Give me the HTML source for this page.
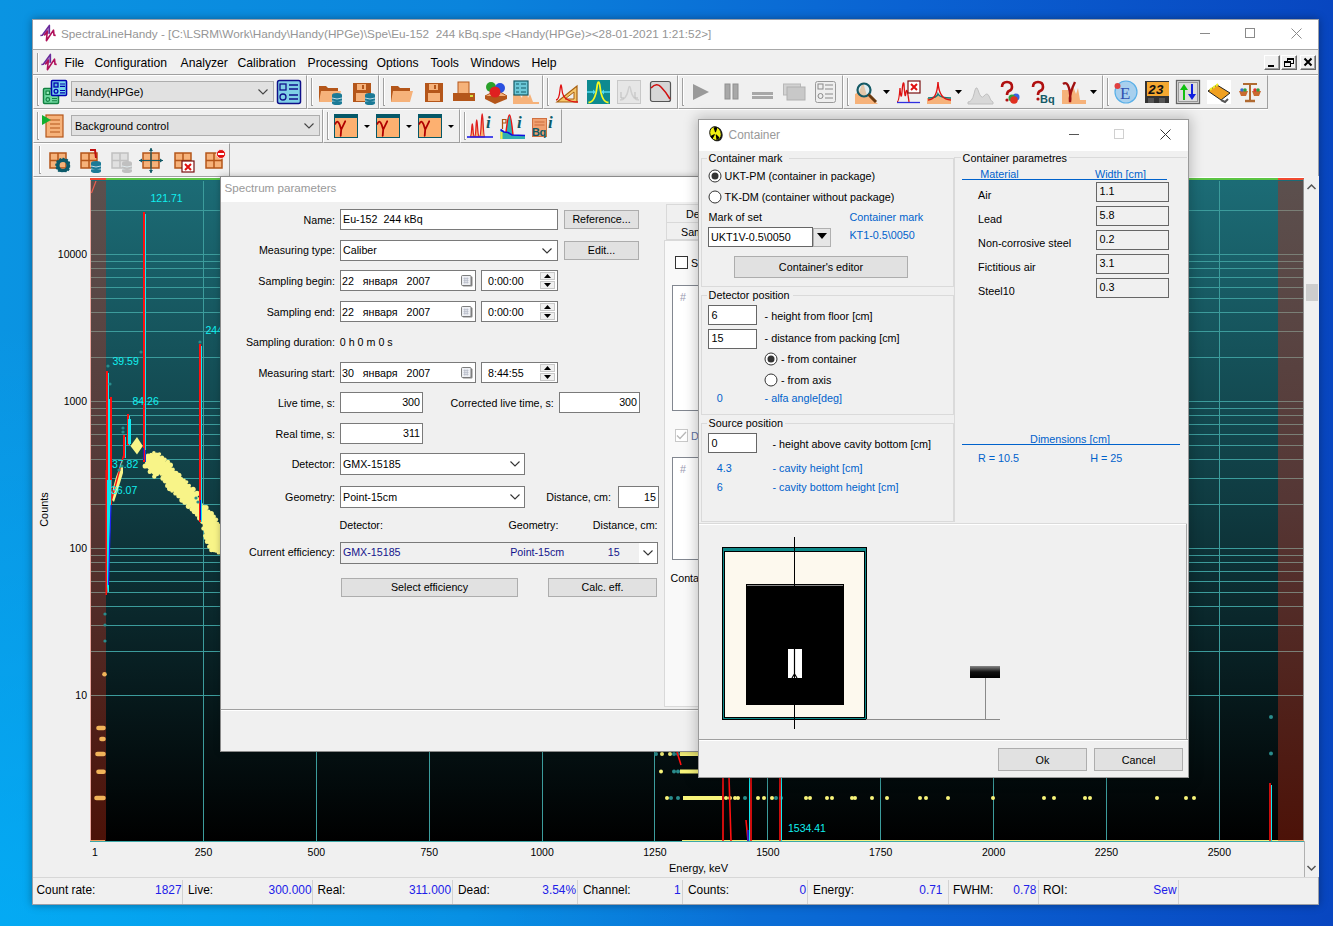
<!DOCTYPE html>
<html><head><meta charset="utf-8">
<style>
*{box-sizing:border-box;margin:0;padding:0}
html,body{width:1333px;height:926px;overflow:hidden}
body{position:relative;font-family:"Liberation Sans",sans-serif;font-size:12px;color:#000;
background:radial-gradient(ellipse 1000px 800px at 0% 100%,rgba(0,185,255,.6),rgba(0,185,255,0) 75%),linear-gradient(90deg,#0a94e2 0%,#0a84dc 35%,#0a62d2 68%,#0846c0 100%)}
.a{position:absolute}
.t{position:absolute;white-space:pre}
svg{overflow:visible}
</style></head><body>
<div class="a" style="left:32px;top:19px;width:1287px;height:886px;background:#f0f0f0;border:1px solid rgba(50,60,80,.45);box-shadow:0 0 8px rgba(0,0,0,.35)"></div>
<div class="a" style="left:33px;top:20px;width:1285px;height:29px;background:#fff"></div>
<div class="a" style="left:33px;top:49px;width:1285px;height:1px;background:#a8a8a8"></div>
<svg class="a" style="left:38px;top:23px;" width="22" height="20" viewBox="0 0 22 20"><path d="M4.3 12.3 L11.4 2.4 L11.4 10.8 Z" fill="#a88ad0"/><path d="M2.4 12.5 L4.3 12.3 L11.4 2.4 L11.4 10.8" fill="none" stroke="#6a2a9a" stroke-width="1.5" stroke-linejoin="round"/><path d="M6.3 12.5 L9.3 8.2 L8.4 17.7 L15.5 7.1 L16 12.1 L17.7 12.5" fill="none" stroke="#b0105a" stroke-width="1.6" stroke-linejoin="round"/></svg>
<div class="t" style="top:26.43px;font-size:11.75px;line-height:15px;color:#959595;left:61px;">SpectraLineHandy - [C:\LSRM\Work\Handy\Handy(HPGe)\Spe\Eu-152  244 kBq.spe &lt;Handy(HPGe)&gt;&lt;28-01-2021 1:21:52&gt;]</div>
<div class="a" style="left:1200px;top:33px;width:10px;height:1px;background:#8a8a8a"></div>
<div class="a" style="left:1245px;top:28px;width:10px;height:10px;border:1px solid #8a8a8a"></div>
<svg class="a" style="left:1291px;top:28px;" width="11" height="11" viewBox="0 0 11 11"><path d="M0.5 0.5 L10.5 10.5 M10.5 0.5 L0.5 10.5" stroke="#8a8a8a" stroke-width="1"/></svg>
<div class="a" style="left:33px;top:74px;width:1285px;height:1px;background:#a0a0a0"></div>
<div class="a" style="left:33px;top:75px;width:1285px;height:1px;background:#fff"></div>
<div class="a" style="left:37px;top:53px;width:1px;height:19px;background:#a0a0a0"></div>
<div class="a" style="left:38px;top:53px;width:1px;height:19px;background:#fff"></div>
<svg class="a" style="left:39px;top:52px;" width="22" height="20" viewBox="0 0 22 20"><path d="M4.3 12.3 L11.4 2.4 L11.4 10.8 Z" fill="#a88ad0"/><path d="M2.4 12.5 L4.3 12.3 L11.4 2.4 L11.4 10.8" fill="none" stroke="#6a2a9a" stroke-width="1.5" stroke-linejoin="round"/><path d="M6.3 12.5 L9.3 8.2 L8.4 17.7 L15.5 7.1 L16 12.1 L17.7 12.5" fill="none" stroke="#b0105a" stroke-width="1.6" stroke-linejoin="round"/></svg>
<div class="t" style="top:55.77px;font-size:12.2px;line-height:15px;left:64.5px;">File</div>
<div class="t" style="top:55.77px;font-size:12.2px;line-height:15px;left:94.5px;">Configuration</div>
<div class="t" style="top:55.77px;font-size:12.2px;line-height:15px;left:180.5px;">Analyzer</div>
<div class="t" style="top:55.77px;font-size:12.2px;line-height:15px;left:237.5px;">Calibration</div>
<div class="t" style="top:55.77px;font-size:12.2px;line-height:15px;left:307.5px;">Processing</div>
<div class="t" style="top:55.77px;font-size:12.2px;line-height:15px;left:376.5px;">Options</div>
<div class="t" style="top:55.77px;font-size:12.2px;line-height:15px;left:430.5px;">Tools</div>
<div class="t" style="top:55.77px;font-size:12.2px;line-height:15px;left:470.5px;">Windows</div>
<div class="t" style="top:55.77px;font-size:12.2px;line-height:15px;left:531.5px;">Help</div>
<div class="a" style="left:1264px;top:55px;width:16px;height:15px;background:#f0f0f0;border-top:1px solid #fff;border-left:1px solid #fff;border-right:1px solid #696969;border-bottom:1px solid #696969;box-shadow:inset -1px -1px 0 #a0a0a0"></div>
<div class="a" style="left:1268px;top:65px;width:6px;height:2px;background:#000"></div>
<div class="a" style="left:1281px;top:55px;width:16px;height:15px;background:#f0f0f0;border-top:1px solid #fff;border-left:1px solid #fff;border-right:1px solid #696969;border-bottom:1px solid #696969;box-shadow:inset -1px -1px 0 #a0a0a0"></div>
<div class="a" style="left:1287px;top:58px;width:7px;height:6px;border:1px solid #000;border-top-width:2px"></div>
<div class="a" style="left:1284px;top:61px;width:7px;height:6px;border:1px solid #000;border-top-width:2px;background:#f0f0f0"></div>
<div class="a" style="left:1300px;top:55px;width:16px;height:15px;background:#f0f0f0;border-top:1px solid #fff;border-left:1px solid #fff;border-right:1px solid #696969;border-bottom:1px solid #696969;box-shadow:inset -1px -1px 0 #a0a0a0"></div>
<svg class="a" style="left:1304px;top:58px;" width="8" height="8" viewBox="0 0 8 8"><path d="M0.5 0.5 L7.5 7.5 M7.5 0.5 L0.5 7.5" stroke="#000" stroke-width="2"/></svg>
<div class="a" style="left:33px;top:108px;width:1235px;height:1px;background:#a0a0a0"></div>
<div class="a" style="left:33px;top:109px;width:1235px;height:1px;background:#fff"></div>
<div class="a" style="left:33px;top:75px;width:274px;height:34px;border-top:1px solid #fff;border-left:1px solid #fff;border-right:1px solid #a0a0a0;border-bottom:1px solid #a0a0a0"></div>
<div class="a" style="left:37px;top:78px;width:1px;height:28px;background:#a0a0a0"></div>
<div class="a" style="left:38px;top:78px;width:1px;height:28px;background:#fff"></div>
<div class="a" style="left:37px;top:105px;width:2px;height:1px;background:#a0a0a0"></div>
<div class="a" style="left:307px;top:75px;width:72px;height:34px;border-top:1px solid #fff;border-left:1px solid #fff;border-right:1px solid #a0a0a0;border-bottom:1px solid #a0a0a0"></div>
<div class="a" style="left:311px;top:78px;width:1px;height:28px;background:#a0a0a0"></div>
<div class="a" style="left:312px;top:78px;width:1px;height:28px;background:#fff"></div>
<div class="a" style="left:311px;top:105px;width:2px;height:1px;background:#a0a0a0"></div>
<div class="a" style="left:379px;top:75px;width:164px;height:34px;border-top:1px solid #fff;border-left:1px solid #fff;border-right:1px solid #a0a0a0;border-bottom:1px solid #a0a0a0"></div>
<div class="a" style="left:383px;top:78px;width:1px;height:28px;background:#a0a0a0"></div>
<div class="a" style="left:384px;top:78px;width:1px;height:28px;background:#fff"></div>
<div class="a" style="left:383px;top:105px;width:2px;height:1px;background:#a0a0a0"></div>
<div class="a" style="left:543px;top:75px;width:135px;height:34px;border-top:1px solid #fff;border-left:1px solid #fff;border-right:1px solid #a0a0a0;border-bottom:1px solid #a0a0a0"></div>
<div class="a" style="left:547px;top:78px;width:1px;height:28px;background:#a0a0a0"></div>
<div class="a" style="left:548px;top:78px;width:1px;height:28px;background:#fff"></div>
<div class="a" style="left:547px;top:105px;width:2px;height:1px;background:#a0a0a0"></div>
<div class="a" style="left:678px;top:75px;width:165px;height:34px;border-top:1px solid #fff;border-left:1px solid #fff;border-right:1px solid #a0a0a0;border-bottom:1px solid #a0a0a0"></div>
<div class="a" style="left:682px;top:78px;width:1px;height:28px;background:#a0a0a0"></div>
<div class="a" style="left:683px;top:78px;width:1px;height:28px;background:#fff"></div>
<div class="a" style="left:682px;top:105px;width:2px;height:1px;background:#a0a0a0"></div>
<div class="a" style="left:843px;top:75px;width:260px;height:34px;border-top:1px solid #fff;border-left:1px solid #fff;border-right:1px solid #a0a0a0;border-bottom:1px solid #a0a0a0"></div>
<div class="a" style="left:847px;top:78px;width:1px;height:28px;background:#a0a0a0"></div>
<div class="a" style="left:848px;top:78px;width:1px;height:28px;background:#fff"></div>
<div class="a" style="left:847px;top:105px;width:2px;height:1px;background:#a0a0a0"></div>
<div class="a" style="left:1103px;top:75px;width:165px;height:34px;border-top:1px solid #fff;border-left:1px solid #fff;border-right:1px solid #a0a0a0;border-bottom:1px solid #a0a0a0"></div>
<div class="a" style="left:1107px;top:78px;width:1px;height:28px;background:#a0a0a0"></div>
<div class="a" style="left:1108px;top:78px;width:1px;height:28px;background:#fff"></div>
<div class="a" style="left:1107px;top:105px;width:2px;height:1px;background:#a0a0a0"></div>
<div class="a" style="left:33px;top:109px;width:290px;height:34px;border-top:1px solid #fff;border-left:1px solid #fff;border-right:1px solid #a0a0a0;border-bottom:1px solid #a0a0a0"></div>
<div class="a" style="left:37px;top:112px;width:1px;height:28px;background:#a0a0a0"></div>
<div class="a" style="left:38px;top:112px;width:1px;height:28px;background:#fff"></div>
<div class="a" style="left:37px;top:139px;width:2px;height:1px;background:#a0a0a0"></div>
<div class="a" style="left:323px;top:109px;width:137px;height:34px;border-top:1px solid #fff;border-left:1px solid #fff;border-right:1px solid #a0a0a0;border-bottom:1px solid #a0a0a0"></div>
<div class="a" style="left:327px;top:112px;width:1px;height:28px;background:#a0a0a0"></div>
<div class="a" style="left:328px;top:112px;width:1px;height:28px;background:#fff"></div>
<div class="a" style="left:327px;top:139px;width:2px;height:1px;background:#a0a0a0"></div>
<div class="a" style="left:460px;top:109px;width:102px;height:34px;border-top:1px solid #fff;border-left:1px solid #fff;border-right:1px solid #a0a0a0;border-bottom:1px solid #a0a0a0"></div>
<div class="a" style="left:464px;top:112px;width:1px;height:28px;background:#a0a0a0"></div>
<div class="a" style="left:465px;top:112px;width:1px;height:28px;background:#fff"></div>
<div class="a" style="left:464px;top:139px;width:2px;height:1px;background:#a0a0a0"></div>
<div class="a" style="left:33px;top:143px;width:197px;height:34px;border-top:1px solid #fff;border-left:1px solid #fff;border-right:1px solid #a0a0a0;border-bottom:1px solid #a0a0a0"></div>
<div class="a" style="left:39px;top:146px;width:1px;height:28px;background:#a0a0a0"></div>
<div class="a" style="left:40px;top:146px;width:1px;height:28px;background:#fff"></div>
<div class="a" style="left:39px;top:173px;width:2px;height:1px;background:#a0a0a0"></div>
<div class="a" style="left:33px;top:177px;width:1285px;height:1px;background:#fff"></div>
<div class="a" style="left:71px;top:81px;width:203px;height:21px;background:#e1e1e1;border:1px solid #adadad"></div>
<div class="t" style="top:85.22px;font-size:10.9px;line-height:14px;left:75px;">Handy(HPGe)</div>
<svg class="a" style="left:258px;top:88.5px;" width="10" height="6" viewBox="0 0 10 6"><path d="M0.5 0.5 L5 5 L9.5 0.5" fill="none" stroke="#444" stroke-width="1.1"/></svg>
<div class="a" style="left:71px;top:115px;width:249px;height:21px;background:#e1e1e1;border:1px solid #adadad"></div>
<div class="t" style="top:119.22px;font-size:10.9px;line-height:14px;left:75px;">Background control</div>
<svg class="a" style="left:304px;top:122.5px;" width="10" height="6" viewBox="0 0 10 6"><path d="M0.5 0.5 L5 5 L9.5 0.5" fill="none" stroke="#444" stroke-width="1.1"/></svg>
<svg class="a" style="left:42px;top:79px;" width="26" height="26" viewBox="0 0 26 26"><rect x="1.5" y="9.5" width="15" height="15" rx="1" fill="#70d8a0" stroke="#108040" stroke-width="1.5"/><rect x="4" y="12" width="3.5" height="3.5" fill="#a0f0c0" stroke="#108040" stroke-width="1.2"/><circle cx="5.8" cy="20.5" r="1.8" fill="none" stroke="#108040" stroke-width="1.2"/><path d="M10 19.5h5 M10 21.8h5" stroke="#108040" stroke-width="1.1"/><rect x="9.5" y="1.5" width="15" height="15" rx="1" fill="#78d4ec" stroke="#0000b0" stroke-width="1.6"/><rect x="12" y="4" width="4" height="4" fill="#60b8d8" stroke="#0000b0" stroke-width="1.3"/><circle cx="14" cy="12.3" r="1.9" fill="none" stroke="#0000b0" stroke-width="1.3"/><path d="M18 5h5 M18 7.3h5 M18 11.5h5 M18 13.8h5" stroke="#0000b0" stroke-width="1.2"/></svg>
<svg class="a" style="left:277px;top:80px;" width="24" height="24" viewBox="0 0 24 24"><rect x="0.5" y="0.5" width="23" height="23" rx="2" fill="#7fd0e6" stroke="#10108a" stroke-width="1.5"/><rect x="3" y="4" width="6" height="6" fill="none" stroke="#10108a" stroke-width="1.3"/><circle cx="6" cy="17" r="3" fill="none" stroke="#10108a" stroke-width="1.3"/><path d="M12 5h9 M12 9h9 M12 15h9 M12 19h9" stroke="#10108a" stroke-width="1.3"/></svg>
<svg class="a" style="left:318px;top:81px;" width="25" height="24" viewBox="0 0 25 24"><path d="M1 5 h7 l2 2 h10 v14 h-19z" fill="#b4561a"/><path d="M3 10 h20 l-3 11 h-19z" fill="#f6b27a"/><ellipse cx="19" cy="14" rx="5" ry="2" fill="#1b7a96"/><rect x="14" y="14" width="10" height="8" fill="#1b7a96"/><path d="M14 17 q5 2 10 0 M14 20 q5 2 10 0" stroke="#e8f4f8" stroke-width="0.8" fill="none"/><ellipse cx="19" cy="22" rx="5" ry="2" fill="#1b7a96"/></svg>
<svg class="a" style="left:351px;top:81px;" width="25" height="24" viewBox="0 0 25 24"><rect x="2" y="2" width="18" height="19" fill="#b4561a"/><rect x="6" y="3" width="9" height="6" fill="#f6b27a"/><rect x="11" y="4" width="2" height="4" fill="#b4561a"/><rect x="5" y="12" width="12" height="8" fill="#f6b27a"/><ellipse cx="19" cy="14" rx="5" ry="2" fill="#1b7a96"/><rect x="14" y="14" width="10" height="8" fill="#1b7a96"/><path d="M14 17 q5 2 10 0 M14 20 q5 2 10 0" stroke="#e8f4f8" stroke-width="0.8" fill="none"/><ellipse cx="19" cy="22" rx="5" ry="2" fill="#1b7a96"/></svg>
<svg class="a" style="left:390px;top:81px;" width="24" height="22" viewBox="0 0 24 22"><path d="M1 5 h7 l2 2 h10 v14 h-19z" fill="#b4561a"/><path d="M3 10 h20 l-3 11 h-19z" fill="#f6b27a"/></svg>
<svg class="a" style="left:423px;top:81px;" width="22" height="22" viewBox="0 0 22 22"><rect x="2" y="2" width="18" height="19" fill="#b4561a"/><rect x="6" y="3" width="9" height="6" fill="#f6b27a"/><rect x="11" y="4" width="2" height="4" fill="#b4561a"/><rect x="5" y="12" width="12" height="8" fill="#f6b27a"/></svg>
<svg class="a" style="left:452px;top:80px;" width="24" height="24" viewBox="0 0 24 24"><rect x="6" y="2" width="11" height="12" fill="#f6b27a" stroke="#b4561a" stroke-width="1"/><rect x="1" y="13" width="22" height="8" fill="#b4561a"/><rect x="18" y="15" width="3" height="2" fill="#d8e040"/></svg>
<svg class="a" style="left:483px;top:80px;" width="24" height="24" viewBox="0 0 24 24"><path d="M2 16 l10 6 l12 -6 l-10 -6z" fill="#f6b27a" stroke="#b4561a" stroke-width="1"/><path d="M2 16 v3 l10 5 l12 -5 v-3" fill="#b4561a"/><circle cx="8" cy="7" r="5" fill="#2aa02a"/><circle cx="17" cy="8" r="5" fill="#2a50e0"/><circle cx="12" cy="12" r="5.5" fill="#e02020"/></svg>
<svg class="a" style="left:513px;top:80px;" width="26" height="24" viewBox="0 0 26 24"><path d="M0 24 v-10 h6 l3 4 l3 -16 l3 16 l2 -4 l3 8 h6 v2z" fill="#f6b27a"/><rect x="1" y="1" width="14" height="14" fill="#6cc8d8" stroke="#145a66" stroke-width="1.2"/><path d="M3 4h3 M8 4h5 M3 8h3 M8 8h5 M3 12h3 M8 12h5" stroke="#145a66" stroke-width="1"/></svg>
<svg class="a" style="left:555px;top:80px;" width="24" height="24" viewBox="0 0 24 24"><path d="M2 22 L22 6 V22z" fill="#f5c56a" stroke="#a86010" stroke-width="1.2"/><path d="M10 19 L19 12 V19z" fill="#f0f0f0" stroke="#a86010" stroke-width="1"/><path d="M1 20 q3 0 4 -10 q1 -10 2 0 q1 12 16 12" fill="none" stroke="#e01010" stroke-width="1.3"/></svg>
<svg class="a" style="left:587px;top:80px;" width="23" height="24" viewBox="0 0 23 24"><rect width="23" height="24" fill="#0e8a90"/><path d="M1.5 22.5 C7 22.5 9 15 10 7 C10.6 0.5 12.4 0.5 13 7 C14 15 16 22.5 21.5 22.5" fill="none" stroke="#f8f820" stroke-width="1.8"/><path d="M0 12 h7 M23 12 h-7" stroke="#50d8f0" stroke-width="1.5"/><path d="M9 12 l-3 -2.5 v5z M14 12 l3 -2.5 v5z" fill="#50d8f0"/></svg>
<svg class="a" style="left:617px;top:80px;" width="24" height="24" viewBox="0 0 24 24"><rect x="0.5" y="0.5" width="23" height="23" fill="#e6e6e6" stroke="#c8c8c8"/><path d="M3 20 q6 0 8 -9 q1.5 -9 3 0 q2 9 8 9" fill="none" stroke="#cfcfcf" stroke-width="1.5"/><path d="M4 12v6h3 M18 12v6h3" fill="none" stroke="#bdbdbd"/></svg>
<svg class="a" style="left:650px;top:81px;" width="21" height="21" viewBox="0 0 21 21"><rect x="0.5" y="0.5" width="20" height="20" rx="2" fill="#d6d6d6" stroke="#555" stroke-width="1.2"/><path d="M1 7 q6 -6 10 -1 q5 5 9 12" fill="none" stroke="#d01010" stroke-width="1.6"/></svg>
<svg class="a" style="left:692px;top:83px;" width="18" height="18" viewBox="0 0 18 18"><path d="M1 1 L17 9 L1 17z" fill="#9a9a9a"/></svg>
<svg class="a" style="left:724px;top:84px;" width="16" height="16" viewBox="0 0 16 16"><rect x="1" y="0" width="5" height="15" fill="#a8a8a8" stroke="#909090"/><rect x="9" y="0" width="5" height="15" fill="#a8a8a8" stroke="#909090"/></svg>
<svg class="a" style="left:752px;top:90px;" width="22" height="10" viewBox="0 0 22 10"><rect x="0" y="2" width="21" height="3" fill="#a8a8a8"/><rect x="0" y="6" width="21" height="3" fill="#a8a8a8"/></svg>
<svg class="a" style="left:783px;top:83px;" width="23" height="18" viewBox="0 0 23 18"><rect x="0.5" y="1" width="17" height="11" fill="#d2d2d2" stroke="#b8b8b8"/><rect x="4" y="4" width="18" height="13" fill="#c8c8c8" stroke="#b0b0b0"/></svg>
<svg class="a" style="left:815px;top:81px;" width="21" height="22" viewBox="0 0 21 22"><rect x="0.5" y="0.5" width="20" height="21" rx="2" fill="#eee" stroke="#9a9a9a"/><rect x="3" y="3" width="5" height="5" fill="none" stroke="#8a8a8a"/><circle cx="5.5" cy="15" r="2.5" fill="none" stroke="#8a8a8a"/><path d="M10 4h8 M10 8h8 M10 13h8 M10 17h8" stroke="#8a8a8a"/></svg>
<svg class="a" style="left:855px;top:80px;" width="23" height="24" viewBox="0 0 23 24"><path d="M0 24 v-10 l4 -2 l4 -10 l4 14 l4 2 l7 6 z" fill="#f6b27a"/><circle cx="9" cy="10" r="6.5" fill="rgba(200,230,240,.4)" stroke="#145a66" stroke-width="2.2"/><path d="M13.5 14.5 L21 22" stroke="#6a3a10" stroke-width="3"/></svg>
<svg class="a" style="left:883px;top:90px;" width="7" height="4" viewBox="0 0 7 4"><path d="M0 0h7l-3.5 4z" fill="#000"/></svg>
<svg class="a" style="left:896px;top:80px;" width="25" height="24" viewBox="0 0 25 24"><path d="M1 22 q2 0 3 -14 q1 14 2 4 q1 -12 2 -8 q1 18 2 8 q1 -6 3 10" fill="none" stroke="#e01010" stroke-width="1.3"/><path d="M1 22.5 h23" stroke="#3030e0" stroke-width="1.3"/><rect x="12" y="1" width="12" height="12" fill="#fff" stroke="#7a1010" stroke-width="1.2"/><path d="M15 4 l6 6 M21 4 l-6 6" stroke="#e01010" stroke-width="2"/></svg>
<svg class="a" style="left:927px;top:80px;" width="24" height="24" viewBox="0 0 24 24"><path d="M0 24 v-6 q8 0 10 -4 q2 4 14 4 v6z" fill="#f6b27a"/><path d="M1 18 q9 0 10 -4 q2 4 13 4" fill="none" stroke="#147a7a" stroke-width="1.6"/><path d="M1 20 q9 0 10 -18 q1 18 13 18" fill="none" stroke="#e01010" stroke-width="1.4"/></svg>
<svg class="a" style="left:955px;top:90px;" width="7" height="4" viewBox="0 0 7 4"><path d="M0 0h7l-3.5 4z" fill="#000"/></svg>
<svg class="a" style="left:968px;top:80px;" width="25" height="24" viewBox="0 0 25 24"><path d="M0 22 q4 0 6 -8 q2 -10 4 -4 q3 10 6 6 q3 -4 5 0 q2 6 4 6 v2 h-25z" fill="#d8d8d8" stroke="#c0c0c0"/></svg>
<svg class="a" style="left:1000px;top:80px;" width="22" height="24" viewBox="0 0 22 24"><path d="M2 7 q0 -5 5 -5 q5 0 5 5 q0 3 -3 4 q-2 1 -2 4" fill="none" stroke="#b01010" stroke-width="2.6"/><circle cx="7" cy="20" r="1.6" fill="#b01010"/><circle cx="16" cy="17" r="3.5" fill="#3a60e0"/><circle cx="12" cy="18" r="3.5" fill="#30a040"/><circle cx="14" cy="20" r="3.8" fill="#e03020"/></svg>
<svg class="a" style="left:1031px;top:80px;" width="24" height="24" viewBox="0 0 24 24"><path d="M2 7 q0 -5 5 -5 q5 0 5 5 q0 3 -3 4 q-2 1 -2 4" fill="none" stroke="#b01010" stroke-width="2.6"/><circle cx="7" cy="19" r="1.6" fill="#b01010"/><text x="9" y="23" font-family="Liberation Sans" font-weight="bold" font-size="11" fill="#145a66">Bq</text></svg>
<svg class="a" style="left:1062px;top:80px;" width="24" height="24" viewBox="0 0 24 24"><path d="M0 24 v-14 h6 l2 6 l3 -10 l3 8 l2 -6 l2 12 h6 v4z" fill="#f6b27a"/><path d="M1 4 q4 -3 6 4 q2 8 1 14 M8 22 q-1 -8 5 -20" fill="none" stroke="#a01010" stroke-width="2.4"/></svg>
<svg class="a" style="left:1090px;top:90px;" width="7" height="4" viewBox="0 0 7 4"><path d="M0 0h7l-3.5 4z" fill="#000"/></svg>
<svg class="a" style="left:1114px;top:80px;" width="24" height="24" viewBox="0 0 24 24"><circle cx="12" cy="12" r="11" fill="#a8d0ee" stroke="#5ab0e8" stroke-width="1.2"/><text x="6" y="19" font-family="Liberation Serif" font-size="17" fill="#3050b0">E</text><circle cx="3.5" cy="6" r="3" fill="#e04040"/></svg>
<svg class="a" style="left:1145px;top:81px;" width="24" height="22" viewBox="0 0 24 22"><rect width="24" height="22" fill="#333"/><rect x="2" y="1" width="22" height="14" fill="#f5a830"/><text x="3" y="13" font-family="Liberation Mono" font-style="italic" font-weight="bold" font-size="13" fill="#111">23</text><rect x="3" y="17" width="6" height="5" fill="#555"/><rect x="14" y="17" width="6" height="5" fill="#555"/></svg>
<svg class="a" style="left:1176px;top:80px;" width="24" height="24" viewBox="0 0 24 24"><rect x="0.5" y="0.5" width="23" height="23" fill="#ddd" stroke="#666" stroke-width="1.3"/><rect x="2.5" y="2.5" width="19" height="19" fill="#dcdcdc" stroke="#999"/><path d="M8 4 l-4 6 h3 v10 h2 v-10 h3z" fill="#10c010"/><path d="M16 20 l-4 -6 h3 v-10 h2 v10 h3z" fill="#1020e0"/></svg>
<svg class="a" style="left:1207px;top:80px;" width="24" height="24" viewBox="0 0 24 24"><rect width="24" height="24" fill="#fff"/><path d="M1 11 l9 -6 l13 8 l-9 7z" fill="#f0a020" stroke="#222" stroke-width="1"/><path d="M3 10 l2 -2 M6 8 l2 -2 M9 6 l2 -2" stroke="#f0f020" stroke-width="2"/><path d="M14 20 l4 2 l3 -3" stroke="#555" stroke-width="2" fill="none"/></svg>
<svg class="a" style="left:1238px;top:80px;" width="24" height="24" viewBox="0 0 24 24"><path d="M12 3 v17 M5 4 h14" stroke="#b06a30" stroke-width="2"/><path d="M7 21 h10" stroke="#b06a30" stroke-width="2.5"/><path d="M1 11 h9 l-2 5 h-5z M14 11 h9 l-2 5 h-5z" fill="#c86a30"/><circle cx="4" cy="10" r="1.8" fill="#3a6ad0"/><circle cx="7" cy="10" r="1.8" fill="#30a040"/><circle cx="17" cy="10" r="1.8" fill="#e03030"/><circle cx="20" cy="10" r="1.8" fill="#30a040"/></svg>
<svg class="a" style="left:41px;top:112px;" width="24" height="26" viewBox="0 0 24 26"><rect x="5" y="3" width="17" height="22" fill="#f6b27a" stroke="#b4561a" stroke-width="1.2"/><path d="M9 8h10 M9 12h10 M9 16h10 M9 20h10" stroke="#b4561a" stroke-width="1"/><path d="M1 3 L10 8 L1 13z" fill="#10b030"/></svg>
<svg class="a" style="left:334px;top:114px;" width="24" height="24" viewBox="0 0 24 24"><rect x="0.5" y="0.5" width="23" height="23" fill="#fdb070" stroke="#055868" stroke-width="1"/><rect x="0" y="0" width="24" height="4" fill="#055868"/><path d="M1.3 9.8 Q3.4 5 5.6 10.5 L7.2 15.6 L6.7 21.8 M7.2 15.6 L11.2 7.3" fill="none" stroke="#b00000" stroke-width="1.8" stroke-linecap="round"/></svg>
<svg class="a" style="left:364px;top:125px;" width="6" height="3" viewBox="0 0 6 3"><path d="M0 0h6l-3 3z" fill="#000"/></svg>
<svg class="a" style="left:376px;top:114px;" width="24" height="24" viewBox="0 0 24 24"><rect x="0.5" y="0.5" width="23" height="23" fill="#fdb070" stroke="#055868" stroke-width="1"/><rect x="0" y="0" width="24" height="4" fill="#055868"/><path d="M1.3 9.8 Q3.4 5 5.6 10.5 L7.2 15.6 L6.7 21.8 M7.2 15.6 L11.2 7.3" fill="none" stroke="#b00000" stroke-width="1.8" stroke-linecap="round"/></svg>
<svg class="a" style="left:406px;top:125px;" width="6" height="3" viewBox="0 0 6 3"><path d="M0 0h6l-3 3z" fill="#000"/></svg>
<svg class="a" style="left:418px;top:114px;" width="24" height="24" viewBox="0 0 24 24"><rect x="0.5" y="0.5" width="23" height="23" fill="#fdb070" stroke="#055868" stroke-width="1"/><rect x="0" y="0" width="24" height="4" fill="#055868"/><path d="M1.3 9.8 Q3.4 5 5.6 10.5 L7.2 15.6 L6.7 21.8 M7.2 15.6 L11.2 7.3" fill="none" stroke="#b00000" stroke-width="1.8" stroke-linecap="round"/></svg>
<svg class="a" style="left:448px;top:125px;" width="6" height="3" viewBox="0 0 6 3"><path d="M0 0h6l-3 3z" fill="#000"/></svg>
<svg class="a" style="left:466px;top:110px;" width="30" height="30" viewBox="0 0 30 30"><path d="M4 26.8 C6 26.8 5.5 14 6.3 14 C7.1 14 6.8 26.8 8.5 26.8 C10.3 26.8 9.8 10 10.7 10 C11.6 10 11.3 26.8 13.5 26.8 C15.4 26.8 15.2 4 16.2 4 C17.2 4 17 26.8 18.8 26.8z" fill="#f6b070" stroke="#e02020" stroke-width="1.3"/><path d="M1 27 H27" stroke="#2020e8" stroke-width="1.6"/><text x="20" y="17.6" font-family="Liberation Serif" font-style="italic" font-weight="bold" font-size="17" fill="#0c5a68">i</text></svg>
<svg class="a" style="left:500px;top:110px;" width="30" height="30" viewBox="0 0 30 30"><path d="M0.5 19.5 L4 22 L8 22.5 L12 25 L25 25.5 V29 H0.5z" fill="#30b0b0"/><path d="M6 22 Q8 5 9.5 5 Q11 5 13 25 H6z" fill="#30b0b0"/><rect x="0.5" y="22" width="2" height="7" fill="#f0f040"/><path d="M6 22 Q8 5 9.5 5 Q11 5 13 25" fill="none" stroke="#f01010" stroke-width="1.4"/><path d="M0.5 19.5 L4 22 L8 22.5 L12 25 L25 25.5" fill="none" stroke="#1010e0" stroke-width="1.6"/><path d="M2.5 19 V9.5 H6 V13 H2.5" fill="none" stroke="#b05010" stroke-width="1.2"/><text x="17" y="17.6" font-family="Liberation Serif" font-style="italic" font-weight="bold" font-size="17" fill="#0c5a68">i</text></svg>
<svg class="a" style="left:531px;top:110px;" width="30" height="30" viewBox="0 0 30 30"><rect x="1.5" y="8.5" width="14" height="18" fill="#f0a070" stroke="#d07040"/><path d="M3.5 12h10 M3.5 15h10" stroke="#c06030" stroke-width="0.8"/><text x="1" y="26" font-family="Liberation Sans" font-weight="bold" font-size="11" letter-spacing="-0.5" fill="#0c5a68">Bq</text><text x="17" y="17.6" font-family="Liberation Serif" font-style="italic" font-weight="bold" font-size="17" fill="#0c5a68">i</text></svg>
<svg class="a" style="left:49px;top:149px;" width="22" height="24" viewBox="0 0 22 24"><rect x="1" y="4" width="16" height="15" fill="#f6b27a" stroke="#b4561a" stroke-width="1.5"/><path d="M9 4 v15 M1 11.5 h16" stroke="#b4561a" stroke-width="1.5"/><circle cx="14" cy="16.5" r="5.2" fill="none" stroke="#0c5a6a" stroke-width="3.6"/><circle cx="14" cy="16.5" r="7" fill="none" stroke="#0c5a6a" stroke-width="1.6" stroke-dasharray="2 1.6"/><rect x="21.2" y="8" width="3" height="16" fill="#f0f0f0"/><rect x="5" y="23.2" width="18" height="2" fill="#f0f0f0"/></svg>
<svg class="a" style="left:80px;top:149px;" width="22" height="24" viewBox="0 0 22 24"><rect x="1" y="4" width="16" height="15" fill="#f6b27a" stroke="#b4561a" stroke-width="1.5"/><path d="M9 4 v15 M1 11.5 h16" stroke="#b4561a" stroke-width="1.5"/><ellipse cx="16" cy="14" rx="5" ry="2" fill="#1b7a96"/><rect x="11" y="14" width="10" height="8" fill="#1b7a96"/><path d="M11 17 q5 2 10 0 M11 20 q5 2 10 0" stroke="#e8f4f8" stroke-width="0.8" fill="none"/><ellipse cx="16" cy="22" rx="5" ry="2" fill="#1b7a96"/><path d="M10 1 l5 0 l1 8" stroke="#c01010" stroke-width="2" fill="none"/></svg>
<svg class="a" style="left:111px;top:149px;" width="22" height="24" viewBox="0 0 22 24"><rect x="1" y="4" width="16" height="15" fill="#e0e0e0" stroke="#c0c0c0" stroke-width="1.5"/><path d="M9 4 v15 M1 11.5 h16" stroke="#c0c0c0" stroke-width="1.5"/><ellipse cx="16" cy="14" rx="5" ry="2" fill="#c0c0c0"/><rect x="11" y="14" width="10" height="8" fill="#c0c0c0"/><path d="M11 17 q5 2 10 0 M11 20 q5 2 10 0" stroke="#e8f4f8" stroke-width="0.8" fill="none"/><ellipse cx="16" cy="22" rx="5" ry="2" fill="#c0c0c0"/></svg>
<svg class="a" style="left:139px;top:148px;" width="24" height="25" viewBox="0 0 24 25"><g transform="translate(3,1)"><rect x="1" y="4" width="16" height="15" fill="#f6b27a" stroke="#b4561a" stroke-width="1.5"/><path d="M9 4 v15 M1 11.5 h16" stroke="#b4561a" stroke-width="1.5"/></g><path d="M12 0v25 M0 12.5h24" stroke="#145a66" stroke-width="1.2"/><path d="M12 0l-2 3h4z M12 25l-2 -3h4z M0 12.5l3 -2v4z M24 12.5l-3 -2v4z" fill="#145a66"/></svg>
<svg class="a" style="left:174px;top:149px;" width="21" height="24" viewBox="0 0 21 24"><rect x="1" y="4" width="16" height="15" fill="#f6b27a" stroke="#b4561a" stroke-width="1.5"/><path d="M9 4 v15 M1 11.5 h16" stroke="#b4561a" stroke-width="1.5"/><rect x="8" y="12" width="12" height="11" fill="#fff" stroke="#7a1010" stroke-width="1.2"/><path d="M11 15 l6 6 M17 15 l-6 6" stroke="#e01010" stroke-width="2"/></svg>
<svg class="a" style="left:205px;top:148px;" width="21" height="24" viewBox="0 0 21 24"><g transform="translate(0,1)"><rect x="1" y="4" width="16" height="15" fill="#f6b27a" stroke="#b4561a" stroke-width="1.5"/><path d="M9 4 v15 M1 11.5 h16" stroke="#b4561a" stroke-width="1.5"/></g><circle cx="16" cy="6" r="4.5" fill="#e01010" stroke="#fff" stroke-width="0.8"/><rect x="13" y="5" width="6" height="2" fill="#fff"/></svg>
<div class="a" style="left:33px;top:178px;width:1271px;height:699px;background:#f0f0f0"></div>
<svg class="a" style="left:0;top:0" width="1333" height="926"><defs><linearGradient id="bg" x1="0" y1="0" x2="0" y2="1"><stop offset="0" stop-color="#1c6c76"/><stop offset="0.5" stop-color="#0f3a40"/><stop offset="1" stop-color="#000"/></linearGradient><linearGradient id="br" x1="0" y1="0" x2="0" y2="1"><stop offset="0" stop-color="#5c504e"/><stop offset="0.5" stop-color="#553634"/><stop offset="1" stop-color="#4c1208"/></linearGradient></defs><rect x="90" y="178" width="1214" height="663" fill="url(#bg)"/><rect x="90" y="178" width="16" height="663" fill="url(#br)"/><rect x="1278" y="178" width="26" height="663" fill="url(#br)"/><path d="M106 695.5 H1278" stroke="#3c9c9c" stroke-width="1"/><path d="M90 695.5 H106 M1278 695.5 H1304" stroke="#7a7f76" stroke-width="1"/><path d="M106 651.5 H1278" stroke="#3c9c9c" stroke-width="1"/><path d="M90 651.5 H106 M1278 651.5 H1304" stroke="#7a7f76" stroke-width="1"/><path d="M106 625.5 H1278" stroke="#3c9c9c" stroke-width="1"/><path d="M90 625.5 H106 M1278 625.5 H1304" stroke="#7a7f76" stroke-width="1"/><path d="M106 606.5 H1278" stroke="#3c9c9c" stroke-width="1"/><path d="M90 606.5 H106 M1278 606.5 H1304" stroke="#7a7f76" stroke-width="1"/><path d="M106 592.5 H1278" stroke="#3c9c9c" stroke-width="1"/><path d="M90 592.5 H106 M1278 592.5 H1304" stroke="#7a7f76" stroke-width="1"/><path d="M106 581.5 H1278" stroke="#3c9c9c" stroke-width="1"/><path d="M90 581.5 H106 M1278 581.5 H1304" stroke="#7a7f76" stroke-width="1"/><path d="M106 571.5 H1278" stroke="#3c9c9c" stroke-width="1"/><path d="M90 571.5 H106 M1278 571.5 H1304" stroke="#7a7f76" stroke-width="1"/><path d="M106 562.5 H1278" stroke="#3c9c9c" stroke-width="1"/><path d="M90 562.5 H106 M1278 562.5 H1304" stroke="#7a7f76" stroke-width="1"/><path d="M106 555.5 H1278" stroke="#3c9c9c" stroke-width="1"/><path d="M90 555.5 H106 M1278 555.5 H1304" stroke="#7a7f76" stroke-width="1"/><path d="M106 548.5 H1278" stroke="#3c9c9c" stroke-width="1"/><path d="M90 548.5 H106 M1278 548.5 H1304" stroke="#7a7f76" stroke-width="1"/><path d="M106 504.5 H1278" stroke="#3c9c9c" stroke-width="1"/><path d="M90 504.5 H106 M1278 504.5 H1304" stroke="#7a7f76" stroke-width="1"/><path d="M106 478.5 H1278" stroke="#3c9c9c" stroke-width="1"/><path d="M90 478.5 H106 M1278 478.5 H1304" stroke="#7a7f76" stroke-width="1"/><path d="M106 459.5 H1278" stroke="#3c9c9c" stroke-width="1"/><path d="M90 459.5 H106 M1278 459.5 H1304" stroke="#7a7f76" stroke-width="1"/><path d="M106 445.5 H1278" stroke="#3c9c9c" stroke-width="1"/><path d="M90 445.5 H106 M1278 445.5 H1304" stroke="#7a7f76" stroke-width="1"/><path d="M106 434.5 H1278" stroke="#3c9c9c" stroke-width="1"/><path d="M90 434.5 H106 M1278 434.5 H1304" stroke="#7a7f76" stroke-width="1"/><path d="M106 424.5 H1278" stroke="#3c9c9c" stroke-width="1"/><path d="M90 424.5 H106 M1278 424.5 H1304" stroke="#7a7f76" stroke-width="1"/><path d="M106 415.5 H1278" stroke="#3c9c9c" stroke-width="1"/><path d="M90 415.5 H106 M1278 415.5 H1304" stroke="#7a7f76" stroke-width="1"/><path d="M106 408.5 H1278" stroke="#3c9c9c" stroke-width="1"/><path d="M90 408.5 H106 M1278 408.5 H1304" stroke="#7a7f76" stroke-width="1"/><path d="M106 401.5 H1278" stroke="#3c9c9c" stroke-width="1"/><path d="M90 401.5 H106 M1278 401.5 H1304" stroke="#7a7f76" stroke-width="1"/><path d="M106 357.5 H1278" stroke="#3c9c9c" stroke-width="1"/><path d="M90 357.5 H106 M1278 357.5 H1304" stroke="#7a7f76" stroke-width="1"/><path d="M106 331.5 H1278" stroke="#3c9c9c" stroke-width="1"/><path d="M90 331.5 H106 M1278 331.5 H1304" stroke="#7a7f76" stroke-width="1"/><path d="M106 312.5 H1278" stroke="#3c9c9c" stroke-width="1"/><path d="M90 312.5 H106 M1278 312.5 H1304" stroke="#7a7f76" stroke-width="1"/><path d="M106 298.5 H1278" stroke="#3c9c9c" stroke-width="1"/><path d="M90 298.5 H106 M1278 298.5 H1304" stroke="#7a7f76" stroke-width="1"/><path d="M106 287.5 H1278" stroke="#3c9c9c" stroke-width="1"/><path d="M90 287.5 H106 M1278 287.5 H1304" stroke="#7a7f76" stroke-width="1"/><path d="M106 277.5 H1278" stroke="#3c9c9c" stroke-width="1"/><path d="M90 277.5 H106 M1278 277.5 H1304" stroke="#7a7f76" stroke-width="1"/><path d="M106 268.5 H1278" stroke="#3c9c9c" stroke-width="1"/><path d="M90 268.5 H106 M1278 268.5 H1304" stroke="#7a7f76" stroke-width="1"/><path d="M106 261.5 H1278" stroke="#3c9c9c" stroke-width="1"/><path d="M90 261.5 H106 M1278 261.5 H1304" stroke="#7a7f76" stroke-width="1"/><path d="M106 254.5 H1278" stroke="#3c9c9c" stroke-width="1"/><path d="M90 254.5 H106 M1278 254.5 H1304" stroke="#7a7f76" stroke-width="1"/><path d="M106 210.5 H1278" stroke="#3c9c9c" stroke-width="1"/><path d="M90 210.5 H106 M1278 210.5 H1304" stroke="#7a7f76" stroke-width="1"/><path d="M106 210.5 H1278" stroke="#3c9c9c" stroke-width="1"/><path d="M90 210.5 H106 M1278 210.5 H1304" stroke="#7a7f76" stroke-width="1"/><path d="M203.5 179 V841" stroke="#3c9c9c" stroke-width="1"/><path d="M316.5 179 V841" stroke="#3c9c9c" stroke-width="1"/><path d="M429.5 179 V841" stroke="#3c9c9c" stroke-width="1"/><path d="M542.5 179 V841" stroke="#3c9c9c" stroke-width="1"/><path d="M654.5 179 V841" stroke="#3c9c9c" stroke-width="1"/><path d="M767.5 179 V841" stroke="#3c9c9c" stroke-width="1"/><path d="M880.5 179 V841" stroke="#3c9c9c" stroke-width="1"/><path d="M993.5 179 V841" stroke="#3c9c9c" stroke-width="1"/><path d="M1106.5 179 V841" stroke="#3c9c9c" stroke-width="1"/><path d="M1219.5 179 V841" stroke="#3c9c9c" stroke-width="1"/><rect x="90" y="178" width="1214" height="2" fill="#5cc444"/><rect x="90" y="178" width="16" height="2" fill="#f04a30"/><rect x="1278" y="178" width="26" height="2" fill="#f04a30"/><rect x="90" y="180" width="1214" height="1" fill="#1a6a76"/><path d="M90.5 180 V841" stroke="#eaa8a0" stroke-width="1"/><path d="M1303.5 179 V841" stroke="#909090" stroke-width="1"/><path d="M96 181 L91.5 193" stroke="#f06050" stroke-width="1.2"/><path d="M90 841.5 H1304" stroke="#3ca8a8" stroke-width="1"/><path d="M682 840.5 H1278" stroke="#f0f080" stroke-width="1"/><path d="M91 840.5 H105 M1278 840.5 H1304" stroke="#f0a060" stroke-width="1"/><polygon points="145,456.8 151,453.5 156.8,453 162,458 167.9,463.3 173,469 178.9,475 184,480 189.2,485.4 197,494.4 201,504.8 206,509 211.3,513.9 216,520 219,525.5 221,530.7 221.5,552 216,550 211.3,548.9 207,542 204.8,536 202.2,523 197,515 191.8,508.7 185,502 178.9,497 172,490 167.2,485.4 163,478 160.7,471 157,475 154.3,476.3 149,470 145.2,466" fill="#f8f488"/><polygon points="130.5,446 137,437 142.8,446 137,454.4" fill="#f8f488"/><circle cx="145.0" cy="458.1" r="2.2" fill="#f8f488"/><circle cx="148.0" cy="455.6" r="2.2" fill="#f8f488"/><circle cx="151.0" cy="454.5" r="1.8" fill="#f8f488"/><circle cx="153.9" cy="452.8" r="1.8" fill="#f8f488"/><circle cx="156.8" cy="454.2" r="1.8" fill="#f8f488"/><circle cx="159.4" cy="454.1" r="1.8" fill="#f8f488"/><circle cx="162.0" cy="457.8" r="2.2" fill="#f8f488"/><circle cx="164.9" cy="459.4" r="1.8" fill="#f8f488"/><circle cx="167.9" cy="462.0" r="2.2" fill="#f8f488"/><circle cx="170.4" cy="465.0" r="2.6" fill="#f8f488"/><circle cx="173.0" cy="469.4" r="1.8" fill="#f8f488"/><circle cx="175.9" cy="473.3" r="2.6" fill="#f8f488"/><circle cx="178.9" cy="475.3" r="2.6" fill="#f8f488"/><circle cx="181.4" cy="478.9" r="1.8" fill="#f8f488"/><circle cx="184.0" cy="480.2" r="1.8" fill="#f8f488"/><circle cx="186.6" cy="482.1" r="1.8" fill="#f8f488"/><circle cx="189.2" cy="485.5" r="1.8" fill="#f8f488"/><circle cx="193.1" cy="489.3" r="2.6" fill="#f8f488"/><circle cx="197.0" cy="493.4" r="2.6" fill="#f8f488"/><circle cx="199.0" cy="499.8" r="2.6" fill="#f8f488"/><circle cx="201.0" cy="504.4" r="1.8" fill="#f8f488"/><circle cx="203.5" cy="507.5" r="2.6" fill="#f8f488"/><circle cx="206.0" cy="507.7" r="2.6" fill="#f8f488"/><circle cx="208.7" cy="511.4" r="1.8" fill="#f8f488"/><circle cx="211.3" cy="513.7" r="2.6" fill="#f8f488"/><circle cx="213.7" cy="516.8" r="2.2" fill="#f8f488"/><circle cx="216.0" cy="519.6" r="2.2" fill="#f8f488"/><circle cx="217.5" cy="523.6" r="1.8" fill="#f8f488"/><circle cx="219.0" cy="526.3" r="2.6" fill="#f8f488"/><circle cx="220.0" cy="528.3" r="1.8" fill="#f8f488"/><circle cx="145.2" cy="466.0" r="2.6" fill="#f8f488"/><circle cx="149.8" cy="471.8" r="2.2" fill="#f8f488"/><circle cx="154.3" cy="476.6" r="2.2" fill="#f8f488"/><circle cx="155.7" cy="474.5" r="1.8" fill="#f8f488"/><circle cx="157.0" cy="474.0" r="2.2" fill="#f8f488"/><circle cx="158.8" cy="472.0" r="2.2" fill="#f8f488"/><circle cx="160.7" cy="470.8" r="2.2" fill="#f8f488"/><circle cx="161.8" cy="473.2" r="2.6" fill="#f8f488"/><circle cx="163.0" cy="478.2" r="2.6" fill="#f8f488"/><circle cx="165.1" cy="481.2" r="2.2" fill="#f8f488"/><circle cx="167.2" cy="485.7" r="2.2" fill="#f8f488"/><circle cx="169.6" cy="488.6" r="2.6" fill="#f8f488"/><circle cx="172.0" cy="491.0" r="1.8" fill="#f8f488"/><circle cx="175.4" cy="493.4" r="2.2" fill="#f8f488"/><circle cx="178.9" cy="495.7" r="2.6" fill="#f8f488"/><circle cx="181.9" cy="500.1" r="2.6" fill="#f8f488"/><circle cx="185.0" cy="502.2" r="2.6" fill="#f8f488"/><circle cx="188.4" cy="506.3" r="2.6" fill="#f8f488"/><circle cx="191.8" cy="509.3" r="2.2" fill="#f8f488"/><circle cx="194.4" cy="511.4" r="2.6" fill="#f8f488"/><circle cx="197.0" cy="514.6" r="2.2" fill="#f8f488"/><circle cx="199.6" cy="517.9" r="2.6" fill="#f8f488"/><circle cx="202.2" cy="522.2" r="1.8" fill="#f8f488"/><circle cx="203.5" cy="528.4" r="2.2" fill="#f8f488"/><circle cx="204.8" cy="535.7" r="1.8" fill="#f8f488"/><circle cx="205.9" cy="537.7" r="2.2" fill="#f8f488"/><circle cx="207.0" cy="541.7" r="2.2" fill="#f8f488"/><circle cx="209.2" cy="546.6" r="2.2" fill="#f8f488"/><circle cx="211.3" cy="550.0" r="2.2" fill="#f8f488"/><circle cx="213.7" cy="550.1" r="2.2" fill="#f8f488"/><circle cx="216.0" cy="550.5" r="2.2" fill="#f8f488"/><circle cx="218.8" cy="552.4" r="2.2" fill="#f8f488"/><polygon points="112,500 113,488 116,477 119.5,468 123,465 123,473 120,483 117,493 114,502" fill="#f8f488"/><rect x="106" y="371" width="2" height="221" fill="#ff1010"/><rect x="108" y="373" width="1" height="219" fill="#10e8f0"/><rect x="110" y="397" width="2" height="108" fill="#ff1010"/><rect x="109" y="399" width="1" height="106" fill="#10e8f0"/><rect x="123" y="435" width="2" height="23" fill="#ff1010"/><rect x="125" y="437" width="1" height="21" fill="#10e8f0"/><rect x="127" y="414" width="2" height="31" fill="#ff1010"/><rect x="129" y="416" width="1" height="29" fill="#10e8f0"/><rect x="143" y="212" width="2" height="250" fill="#ff1010"/><rect x="145" y="214" width="1" height="248" fill="#10e8f0"/><rect x="199" y="344" width="2" height="178" fill="#ff1010"/><rect x="201" y="346" width="1" height="176" fill="#10e8f0"/><path d="M111.5 500 L123.5 455.7" stroke="#ff1010" stroke-width="1.4"/><rect x="128" y="419" width="3" height="25" fill="#10e8f0"/><polygon points="106,480 111.5,480 111,505 109.5,550 108.5,580 107.5,592 106,592" fill="#10e8f0"/><path d="M111 505 L109.5 550 L108.5 585" stroke="#2020f0" stroke-width="1.2" fill="none"/><rect x="105.5" y="470" width="1.5" height="125" fill="#ff1010"/><path d="M143.5 460 V448 M145.5 462 V450" stroke="#1010d0" stroke-width="0.8"/><path d="M200.5 520 V500" stroke="#1010d0" stroke-width="1"/><circle cx="108" cy="366" r="1.6" fill="#2a8c8c"/><circle cx="110" cy="384" r="1.6" fill="#2a8c8c"/><circle cx="123" cy="428" r="1.6" fill="#2a8c8c"/><circle cx="123" cy="432" r="1.6" fill="#2a8c8c"/><circle cx="141" cy="352" r="1.6" fill="#2a8c8c"/><circle cx="200" cy="342" r="1.6" fill="#2a8c8c"/><circle cx="105" cy="614" r="1.6" fill="#2a8c8c"/><circle cx="105" cy="625" r="1.6" fill="#2a8c8c"/><circle cx="105" cy="641" r="1.6" fill="#2a8c8c"/><circle cx="119" cy="470" r="1.6" fill="#2a8c8c"/><circle cx="122" cy="466" r="1.6" fill="#2a8c8c"/><circle cx="196" cy="498" r="1.6" fill="#2a8c8c"/><circle cx="198" cy="502" r="1.6" fill="#2a8c8c"/><path d="M104.5 674.3 H104.5" stroke="#f2b45a" stroke-width="4.6" stroke-linecap="round"/><path d="M98.5 728 H103.5" stroke="#f2b45a" stroke-width="4.6" stroke-linecap="round"/><path d="M101.5 739 H103.5" stroke="#f2b45a" stroke-width="4.6" stroke-linecap="round"/><path d="M97.5 754 H103.5" stroke="#f2b45a" stroke-width="4.6" stroke-linecap="round"/><path d="M98.5 771.8 H103.5" stroke="#f2b45a" stroke-width="4.6" stroke-linecap="round"/><path d="M96.5 798 H103.5" stroke="#f2b45a" stroke-width="4.6" stroke-linecap="round"/><path d="M680 754 H700 M680 771.5 H700 M683 798 H722" stroke="#f8f47a" stroke-width="4"/><circle cx="662" cy="754" r="2" fill="#f8f47a"/><circle cx="670" cy="754" r="2" fill="#f8f47a"/><circle cx="656" cy="754" r="2" fill="#2a8c8c"/><circle cx="674" cy="754" r="2" fill="#2a8c8c"/><circle cx="678" cy="754" r="2" fill="#2a8c8c"/><circle cx="661" cy="771.5" r="2" fill="#f8f47a"/><circle cx="674" cy="771.5" r="2" fill="#2a8c8c"/><circle cx="678" cy="771.5" r="2" fill="#2a8c8c"/><circle cx="667" cy="798" r="2" fill="#f8f47a"/><circle cx="726" cy="798" r="2" fill="#f8f47a"/><circle cx="730" cy="798" r="2" fill="#f8f47a"/><circle cx="735" cy="798" r="2" fill="#f8f47a"/><circle cx="738" cy="798" r="2" fill="#f8f47a"/><circle cx="758" cy="798" r="2" fill="#f8f47a"/><circle cx="764" cy="798" r="2" fill="#f8f47a"/><circle cx="772" cy="798" r="2" fill="#f8f47a"/><circle cx="806" cy="798" r="2" fill="#f8f47a"/><circle cx="810" cy="798" r="2" fill="#f8f47a"/><circle cx="827" cy="798" r="2" fill="#f8f47a"/><circle cx="832" cy="798" r="2" fill="#f8f47a"/><circle cx="852" cy="798" r="2" fill="#f8f47a"/><circle cx="855" cy="798" r="2" fill="#f8f47a"/><circle cx="872" cy="798" r="2" fill="#f8f47a"/><circle cx="887" cy="798" r="2" fill="#f8f47a"/><circle cx="920" cy="798" r="2" fill="#f8f47a"/><circle cx="926" cy="798" r="2" fill="#f8f47a"/><circle cx="948" cy="798" r="2" fill="#f8f47a"/><circle cx="993" cy="798" r="2" fill="#f8f47a"/><circle cx="1044" cy="798" r="2" fill="#f8f47a"/><circle cx="1054" cy="798" r="2" fill="#f8f47a"/><circle cx="1085" cy="798" r="2" fill="#f8f47a"/><circle cx="1090" cy="798" r="2" fill="#f8f47a"/><circle cx="1157" cy="798" r="2" fill="#f8f47a"/><circle cx="1186" cy="798" r="2" fill="#f8f47a"/><circle cx="1194" cy="798" r="2" fill="#f8f47a"/><circle cx="671" cy="798" r="2" fill="#2a8c8c"/><circle cx="678" cy="798" r="2" fill="#2a8c8c"/><circle cx="745" cy="798" r="2" fill="#2a8c8c"/><circle cx="776" cy="798" r="2" fill="#2a8c8c"/><circle cx="781" cy="798" r="2" fill="#2a8c8c"/><path d="M723 777 V841 M729 777 L731 841 M746 820 L748 841 M751 777 V841 M780 777 V841" stroke="#ff1010" stroke-width="1.6"/><path d="M748 830 V841" stroke="#2020f0" stroke-width="1.5"/><path d="M749.5 777 V841 M781.5 777 V841" stroke="#10e8f0" stroke-width="1"/><path d="M677 752 L681 765" stroke="#ff1010" stroke-width="1.6"/><path d="M1270 841 V783" stroke="#ff1010" stroke-width="1.6"/><path d="M1271.5 841 V785" stroke="#10e8f0" stroke-width="1"/><circle cx="1271" cy="717" r="2" fill="#2a8c8c"/><circle cx="1271" cy="753.5" r="2" fill="#2a8c8c"/></svg>
<div class="t" style="top:191.86px;font-size:10.5px;line-height:13px;color:#10f0f0;left:150.5px;">121.71</div>
<div class="t" style="top:355.36px;font-size:10.5px;line-height:13px;color:#10f0f0;left:112.5px;">39.59</div>
<div class="t" style="top:394.86px;font-size:10.5px;line-height:13px;color:#10f0f0;left:132.5px;">84.26</div>
<div class="t" style="top:458.36px;font-size:10.5px;line-height:13px;color:#10f0f0;left:112px;">37.82</div>
<div class="t" style="top:483.86px;font-size:10.5px;line-height:13px;color:#10f0f0;left:111px;">36.07</div>
<div class="t" style="top:323.86px;font-size:10.5px;line-height:13px;color:#10f0f0;left:205.5px;">244</div>
<div class="t" style="top:821.86px;font-size:10.5px;line-height:13px;color:#10f0f0;left:788px;">1534.41</div>
<div class="t" style="top:247.86px;font-size:10.5px;line-height:13px;left:-513px;width:600px;text-align:right;">10000</div>
<div class="t" style="top:394.86px;font-size:10.5px;line-height:13px;left:-513px;width:600px;text-align:right;">1000</div>
<div class="t" style="top:541.86px;font-size:10.5px;line-height:13px;left:-513px;width:600px;text-align:right;">100</div>
<div class="t" style="top:688.86px;font-size:10.5px;line-height:13px;left:-513px;width:600px;text-align:right;">10</div>
<div class="t" style="top:845.86px;font-size:10.5px;line-height:13px;left:-205px;width:600px;text-align:center;">1</div>
<div class="t" style="top:845.86px;font-size:10.5px;line-height:13px;left:-96.525px;width:600px;text-align:center;">250</div>
<div class="t" style="top:845.86px;font-size:10.5px;line-height:13px;left:16.350000000000023px;width:600px;text-align:center;">500</div>
<div class="t" style="top:845.86px;font-size:10.5px;line-height:13px;left:129.22500000000002px;width:600px;text-align:center;">750</div>
<div class="t" style="top:845.86px;font-size:10.5px;line-height:13px;left:242.10000000000002px;width:600px;text-align:center;">1000</div>
<div class="t" style="top:845.86px;font-size:10.5px;line-height:13px;left:354.975px;width:600px;text-align:center;">1250</div>
<div class="t" style="top:845.86px;font-size:10.5px;line-height:13px;left:467.85px;width:600px;text-align:center;">1500</div>
<div class="t" style="top:845.86px;font-size:10.5px;line-height:13px;left:580.725px;width:600px;text-align:center;">1750</div>
<div class="t" style="top:845.86px;font-size:10.5px;line-height:13px;left:693.6px;width:600px;text-align:center;">2000</div>
<div class="t" style="top:845.86px;font-size:10.5px;line-height:13px;left:806.4749999999999px;width:600px;text-align:center;">2250</div>
<div class="t" style="top:845.86px;font-size:10.5px;line-height:13px;left:919.3499999999999px;width:600px;text-align:center;">2500</div>
<div class="t" style="top:861.49px;font-size:11px;line-height:14px;left:398.5px;width:600px;text-align:center;">Energy, keV</div>
<div class="t" style="left:24px;top:503px;width:40px;text-align:center;font-size:10.9px;line-height:13px;transform:rotate(-90deg)">Counts</div>
<div class="a" style="left:1304px;top:176px;width:15px;height:701px;background:#f0f0f0"></div>
<svg class="a" style="left:1307px;top:184px;" width="9" height="6" viewBox="0 0 9 6"><path d="M0.5 5 L4.5 1 L8.5 5" fill="none" stroke="#555" stroke-width="1.5"/></svg>
<svg class="a" style="left:1307px;top:865px;" width="9" height="6" viewBox="0 0 9 6"><path d="M0.5 1 L4.5 5 L8.5 1" fill="none" stroke="#555" stroke-width="1.5"/></svg>
<div class="a" style="left:1306px;top:284px;width:12px;height:17px;background:#cdcdcd"></div>
<div class="a" style="left:1304px;top:841px;width:1px;height:36px;background:#b0b0b0"></div>
<div class="a" style="left:33px;top:877px;width:1285px;height:1px;background:#d7d7d7"></div>
<div class="a" style="left:182px;top:880px;width:1px;height:24px;background:#d2d2d2"></div>
<div class="a" style="left:312px;top:880px;width:1px;height:24px;background:#d2d2d2"></div>
<div class="a" style="left:452px;top:880px;width:1px;height:24px;background:#d2d2d2"></div>
<div class="a" style="left:577px;top:880px;width:1px;height:24px;background:#d2d2d2"></div>
<div class="a" style="left:682px;top:880px;width:1px;height:24px;background:#d2d2d2"></div>
<div class="a" style="left:807px;top:880px;width:1px;height:24px;background:#d2d2d2"></div>
<div class="a" style="left:948px;top:880px;width:1px;height:24px;background:#d2d2d2"></div>
<div class="a" style="left:1038px;top:880px;width:1px;height:24px;background:#d2d2d2"></div>
<div class="a" style="left:1178px;top:880px;width:1px;height:24px;background:#d2d2d2"></div>
<div class="t" style="top:882.88px;font-size:11.9px;line-height:15px;left:36.5px;">Count rate:</div>
<div class="t" style="top:882.88px;font-size:11.9px;line-height:15px;color:#2020e8;left:-418.5px;width:600px;text-align:right;">1827</div>
<div class="t" style="top:882.88px;font-size:11.9px;line-height:15px;left:188.0px;">Live:</div>
<div class="t" style="top:882.88px;font-size:11.9px;line-height:15px;color:#2020e8;left:-288.5px;width:600px;text-align:right;">300.000</div>
<div class="t" style="top:882.88px;font-size:11.9px;line-height:15px;left:317.5px;">Real:</div>
<div class="t" style="top:882.88px;font-size:11.9px;line-height:15px;color:#2020e8;left:-149px;width:600px;text-align:right;">311.000</div>
<div class="t" style="top:882.88px;font-size:11.9px;line-height:15px;left:458.0px;">Dead:</div>
<div class="t" style="top:882.88px;font-size:11.9px;line-height:15px;color:#2020e8;left:-24px;width:600px;text-align:right;">3.54%</div>
<div class="t" style="top:882.88px;font-size:11.9px;line-height:15px;left:583.0px;">Channel:</div>
<div class="t" style="top:882.88px;font-size:11.9px;line-height:15px;color:#2020e8;left:80.5px;width:600px;text-align:right;">1</div>
<div class="t" style="top:882.88px;font-size:11.9px;line-height:15px;left:688.0px;">Counts:</div>
<div class="t" style="top:882.88px;font-size:11.9px;line-height:15px;color:#2020e8;left:206px;width:600px;text-align:right;">0</div>
<div class="t" style="top:882.88px;font-size:11.9px;line-height:15px;left:813.0px;">Energy:</div>
<div class="t" style="top:882.88px;font-size:11.9px;line-height:15px;color:#2020e8;left:342.5px;width:600px;text-align:right;">0.71</div>
<div class="t" style="top:882.88px;font-size:11.9px;line-height:15px;left:953.0px;">FWHM:</div>
<div class="t" style="top:882.88px;font-size:11.9px;line-height:15px;color:#2020e8;left:436.5px;width:600px;text-align:right;">0.78</div>
<div class="t" style="top:882.88px;font-size:11.9px;line-height:15px;left:1043.0px;">ROI:</div>
<div class="t" style="top:882.88px;font-size:11.9px;line-height:15px;color:#2020e8;left:576.5px;width:600px;text-align:right;">Sew</div>
<div class="a" style="left:220px;top:176px;width:780px;height:576px;background:#f0f0f0;border:1px solid #8a8a8a;box-shadow:0 0 6px rgba(0,0,0,.25)"></div>
<div class="a" style="left:221px;top:177px;width:778px;height:25px;background:#fff"></div>
<div class="t" style="top:180.46px;font-size:11.65px;line-height:15px;color:#999;left:224.5px;">Spectrum parameters</div>
<div class="a" style="left:221px;top:709px;width:778px;height:1px;background:#a0a0a0"></div>
<div class="a" style="left:221px;top:710px;width:778px;height:1px;background:#fff"></div>
<div class="t" style="top:213.79px;font-size:10.7px;line-height:13px;left:-265px;width:600px;text-align:right;">Name:</div>
<div class="t" style="top:244.39px;font-size:10.7px;line-height:13px;left:-265px;width:600px;text-align:right;">Measuring type:</div>
<div class="t" style="top:274.79px;font-size:10.7px;line-height:13px;left:-265px;width:600px;text-align:right;">Sampling begin:</div>
<div class="t" style="top:305.59px;font-size:10.7px;line-height:13px;left:-265px;width:600px;text-align:right;">Sampling end:</div>
<div class="t" style="top:335.99px;font-size:10.7px;line-height:13px;left:-265px;width:600px;text-align:right;">Sampling duration:</div>
<div class="t" style="top:366.99px;font-size:10.7px;line-height:13px;left:-265px;width:600px;text-align:right;">Measuring start:</div>
<div class="t" style="top:397.19px;font-size:10.7px;line-height:13px;left:-265px;width:600px;text-align:right;">Live time, s:</div>
<div class="t" style="top:427.79px;font-size:10.7px;line-height:13px;left:-265px;width:600px;text-align:right;">Real time, s:</div>
<div class="t" style="top:457.79px;font-size:10.7px;line-height:13px;left:-265px;width:600px;text-align:right;">Detector:</div>
<div class="t" style="top:490.69px;font-size:10.7px;line-height:13px;left:-265px;width:600px;text-align:right;">Geometry:</div>
<div class="t" style="top:546.19px;font-size:10.7px;line-height:13px;left:-265px;width:600px;text-align:right;">Current efficiency:</div>
<div class="a" style="left:340px;top:209px;width:218px;height:21px;background:#fff;border:1px solid #7a7a7a"></div>
<div class="t" style="top:213.29px;font-size:10.7px;line-height:13px;left:343px;">Eu-152  244 kBq</div>
<div class="a" style="left:564px;top:210px;width:75px;height:19px;background:#e1e1e1;border:1px solid #adadad"></div>
<div class="t" style="top:213.29px;font-size:10.7px;line-height:13px;left:301.5px;width:600px;text-align:center;">Reference...</div>
<div class="a" style="left:340px;top:240px;width:218px;height:21px;background:#fff;border:1px solid #7a7a7a"></div>
<div class="t" style="top:244.29px;font-size:10.7px;line-height:13px;left:343px;">Caliber</div>
<svg class="a" style="left:542px;top:248px;" width="10" height="6" viewBox="0 0 10 6"><path d="M0.5 0.5 L5 5 L9.5 0.5" fill="none" stroke="#333" stroke-width="1.1"/></svg>
<div class="a" style="left:564px;top:241px;width:75px;height:19px;background:#e1e1e1;border:1px solid #adadad"></div>
<div class="t" style="top:244.29px;font-size:10.7px;line-height:13px;left:301.5px;width:600px;text-align:center;">Edit...</div>
<div class="a" style="left:340px;top:270px;width:136px;height:21px;background:#fff;border:1px solid #7a7a7a"></div>
<div class="t" style="top:275.09px;font-size:10.7px;line-height:13px;left:342px;">22   января   2007</div>
<svg class="a" style="left:461px;top:274.5px;" width="12" height="12" viewBox="0 0 12 12"><rect x="1.5" y="1.5" width="10" height="10" rx="1" fill="#8a8a8a"/><rect x="0.5" y="0.5" width="9.5" height="10" rx="1" fill="#eef0f4" stroke="#707070" stroke-width="0.9"/><path d="M2.5 3.5h5 M2.5 5.5h5 M2.5 7.5h5 M3.5 2.5v6 M5 2.5v6 M6.5 2.5v6" stroke="#b8bcc8" stroke-width="0.7"/></svg>
<div class="a" style="left:481px;top:270px;width:77px;height:21px;background:#fff;border:1px solid #7a7a7a"></div>
<div class="t" style="top:274.79px;font-size:10.7px;line-height:13px;left:488px;">0:00:00</div>
<div class="a" style="left:540px;top:272px;width:15px;height:8px;background:#f0f0f0;border:1px solid #c8c8c8"></div>
<div class="a" style="left:540px;top:281px;width:15px;height:8px;background:#f0f0f0;border:1px solid #c8c8c8"></div>
<svg class="a" style="left:544px;top:274px;" width="7" height="4" viewBox="0 0 7 4"><path d="M0 4h7l-3.5 -4z" fill="#000"/></svg>
<svg class="a" style="left:544px;top:283px;" width="7" height="4" viewBox="0 0 7 4"><path d="M0 0h7l-3.5 4z" fill="#000"/></svg>
<div class="a" style="left:340px;top:301px;width:136px;height:21px;background:#fff;border:1px solid #7a7a7a"></div>
<div class="t" style="top:306.09px;font-size:10.7px;line-height:13px;left:342px;">22   января   2007</div>
<svg class="a" style="left:461px;top:305.5px;" width="12" height="12" viewBox="0 0 12 12"><rect x="1.5" y="1.5" width="10" height="10" rx="1" fill="#8a8a8a"/><rect x="0.5" y="0.5" width="9.5" height="10" rx="1" fill="#eef0f4" stroke="#707070" stroke-width="0.9"/><path d="M2.5 3.5h5 M2.5 5.5h5 M2.5 7.5h5 M3.5 2.5v6 M5 2.5v6 M6.5 2.5v6" stroke="#b8bcc8" stroke-width="0.7"/></svg>
<div class="a" style="left:481px;top:301px;width:77px;height:21px;background:#fff;border:1px solid #7a7a7a"></div>
<div class="t" style="top:305.79px;font-size:10.7px;line-height:13px;left:488px;">0:00:00</div>
<div class="a" style="left:540px;top:303px;width:15px;height:8px;background:#f0f0f0;border:1px solid #c8c8c8"></div>
<div class="a" style="left:540px;top:312px;width:15px;height:8px;background:#f0f0f0;border:1px solid #c8c8c8"></div>
<svg class="a" style="left:544px;top:305px;" width="7" height="4" viewBox="0 0 7 4"><path d="M0 4h7l-3.5 -4z" fill="#000"/></svg>
<svg class="a" style="left:544px;top:314px;" width="7" height="4" viewBox="0 0 7 4"><path d="M0 0h7l-3.5 4z" fill="#000"/></svg>
<div class="a" style="left:340px;top:362px;width:136px;height:21px;background:#fff;border:1px solid #7a7a7a"></div>
<div class="t" style="top:367.09px;font-size:10.7px;line-height:13px;left:342px;">30   января   2007</div>
<svg class="a" style="left:461px;top:366.5px;" width="12" height="12" viewBox="0 0 12 12"><rect x="1.5" y="1.5" width="10" height="10" rx="1" fill="#8a8a8a"/><rect x="0.5" y="0.5" width="9.5" height="10" rx="1" fill="#eef0f4" stroke="#707070" stroke-width="0.9"/><path d="M2.5 3.5h5 M2.5 5.5h5 M2.5 7.5h5 M3.5 2.5v6 M5 2.5v6 M6.5 2.5v6" stroke="#b8bcc8" stroke-width="0.7"/></svg>
<div class="a" style="left:481px;top:362px;width:77px;height:21px;background:#fff;border:1px solid #7a7a7a"></div>
<div class="t" style="top:366.79px;font-size:10.7px;line-height:13px;left:488px;">8:44:55</div>
<div class="a" style="left:540px;top:364px;width:15px;height:8px;background:#f0f0f0;border:1px solid #c8c8c8"></div>
<div class="a" style="left:540px;top:373px;width:15px;height:8px;background:#f0f0f0;border:1px solid #c8c8c8"></div>
<svg class="a" style="left:544px;top:366px;" width="7" height="4" viewBox="0 0 7 4"><path d="M0 4h7l-3.5 -4z" fill="#000"/></svg>
<svg class="a" style="left:544px;top:375px;" width="7" height="4" viewBox="0 0 7 4"><path d="M0 0h7l-3.5 4z" fill="#000"/></svg>
<div class="t" style="top:335.99px;font-size:10.7px;line-height:13px;left:339.8px;">0 h 0 m 0 s</div>
<div class="a" style="left:340px;top:392px;width:83px;height:21px;background:#fff;border:1px solid #7a7a7a"></div>
<div class="t" style="top:396.29px;font-size:10.7px;line-height:13px;left:-180px;width:600px;text-align:right;">300</div>
<div class="t" style="top:397.19px;font-size:10.7px;line-height:13px;left:-46.200000000000045px;width:600px;text-align:right;">Corrected live time, s:</div>
<div class="a" style="left:559px;top:392px;width:81px;height:21px;background:#fff;border:1px solid #7a7a7a"></div>
<div class="t" style="top:396.29px;font-size:10.7px;line-height:13px;left:37px;width:600px;text-align:right;">300</div>
<div class="a" style="left:340px;top:423px;width:83px;height:21px;background:#fff;border:1px solid #7a7a7a"></div>
<div class="t" style="top:427.29px;font-size:10.7px;line-height:13px;left:-180px;width:600px;text-align:right;">311</div>
<div class="a" style="left:340px;top:453px;width:185px;height:22px;background:#fff;border:1px solid #7a7a7a"></div>
<div class="t" style="top:457.79px;font-size:10.7px;line-height:13px;left:343px;">GMX-15185</div>
<svg class="a" style="left:510px;top:461px;" width="10" height="6" viewBox="0 0 10 6"><path d="M0.5 0.5 L5 5 L9.5 0.5" fill="none" stroke="#333" stroke-width="1.1"/></svg>
<div class="a" style="left:340px;top:486px;width:185px;height:22px;background:#fff;border:1px solid #7a7a7a"></div>
<div class="t" style="top:490.79px;font-size:10.7px;line-height:13px;left:343px;">Point-15cm</div>
<svg class="a" style="left:510px;top:494px;" width="10" height="6" viewBox="0 0 10 6"><path d="M0.5 0.5 L5 5 L9.5 0.5" fill="none" stroke="#333" stroke-width="1.1"/></svg>
<div class="t" style="top:490.69px;font-size:10.7px;line-height:13px;left:11px;width:600px;text-align:right;">Distance, cm:</div>
<div class="a" style="left:618px;top:486px;width:41px;height:22px;background:#fff;border:1px solid #7a7a7a"></div>
<div class="t" style="top:490.79px;font-size:10.7px;line-height:13px;left:56px;width:600px;text-align:right;">15</div>
<div class="t" style="top:518.99px;font-size:10.7px;line-height:13px;left:339.5px;">Detector:</div>
<div class="t" style="top:518.99px;font-size:10.7px;line-height:13px;left:508.5px;">Geometry:</div>
<div class="t" style="top:518.99px;font-size:10.7px;line-height:13px;left:57.60000000000002px;width:600px;text-align:right;">Distance, cm:</div>
<div class="a" style="left:340px;top:542px;width:318px;height:22px;background:#f0f0f0;border:1px solid #7a7a7a"></div>
<div class="a" style="left:639px;top:543px;width:18px;height:20px;background:#fff"></div>
<svg class="a" style="left:643px;top:550px;" width="10" height="6" viewBox="0 0 10 6"><path d="M0.5 0.5 L5 5 L9.5 0.5" fill="none" stroke="#333" stroke-width="1.1"/></svg>
<div class="t" style="top:546.19px;font-size:10.7px;line-height:13px;color:#14148c;left:342.9px;">GMX-15185</div>
<div class="t" style="top:546.19px;font-size:10.7px;line-height:13px;color:#14148c;left:510.2px;">Point-15cm</div>
<div class="t" style="top:546.19px;font-size:10.7px;line-height:13px;color:#14148c;left:607.7px;">15</div>
<div class="a" style="left:341px;top:578px;width:177px;height:19px;background:#e1e1e1;border:1px solid #adadad"></div>
<div class="t" style="top:581.29px;font-size:10.7px;line-height:13px;left:129.5px;width:600px;text-align:center;">Select efficiency</div>
<div class="a" style="left:548px;top:578px;width:109px;height:19px;background:#e1e1e1;border:1px solid #adadad"></div>
<div class="t" style="top:581.29px;font-size:10.7px;line-height:13px;left:302.5px;width:600px;text-align:center;">Calc. eff.</div>
<div class="a" style="left:666px;top:204px;width:100px;height:19px;background:#f0f0f0;border:1px solid #d9d9d9"></div>
<div class="t" style="top:207.79px;font-size:10.7px;line-height:13px;left:686px;">Detector</div>
<div class="a" style="left:666px;top:222px;width:100px;height:18px;background:#f0f0f0;border:1px solid #d9d9d9"></div>
<div class="t" style="top:225.79px;font-size:10.7px;line-height:13px;left:681px;">Sample</div>
<div class="a" style="left:664px;top:240px;width:300px;height:467px;background:#f9f9f9;border:1px solid #d9d9d9"></div>
<div class="a" style="left:675px;top:256px;width:13px;height:13px;background:#fff;border:1px solid #333"></div>
<div class="t" style="top:256.79px;font-size:10.7px;line-height:13px;left:691px;">Sort</div>
<div class="a" style="left:672px;top:285px;width:200px;height:126px;background:#fff;border:1px solid #828790"></div>
<div class="t" style="top:290.79px;font-size:10.7px;line-height:13px;color:#9a9ab0;left:680px;">#</div>
<div class="a" style="left:675px;top:429px;width:13px;height:13px;background:#fff;border:1px solid #c8c8c8"></div>
<svg class="a" style="left:676px;top:431px;" width="11" height="9" viewBox="0 0 11 9"><path d="M1 4.5 L4 7.5 L10 1" fill="none" stroke="#b8b8b8" stroke-width="1.3"/></svg>
<div class="t" style="top:429.79px;font-size:10.7px;line-height:13px;color:#6070a0;left:691px;">Detector</div>
<div class="a" style="left:672px;top:457px;width:200px;height:103px;background:#fff;border:1px solid #828790"></div>
<div class="t" style="top:462.79px;font-size:10.7px;line-height:13px;color:#9a9ab0;left:680px;">#</div>
<div class="t" style="top:571.79px;font-size:10.7px;line-height:13px;left:670.5px;">Container</div>
<div class="a" style="left:698px;top:119px;width:491px;height:659px;background:#f0f0f0;border:1px solid #9a9a9a;box-shadow:0 0 12px 2px rgba(0,0,0,.22)"></div>
<div class="a" style="left:699px;top:120px;width:489px;height:31px;background:#fff"></div>
<svg class="a" style="left:708px;top:125px;" width="16" height="18" viewBox="0 0 16 18"><ellipse cx="8.5" cy="9" rx="6" ry="7.5" transform="rotate(-20 8.5 9)" fill="#222"/><ellipse cx="7.5" cy="8.5" rx="5.6" ry="7" transform="rotate(-20 7.5 8.5)" fill="#f0f010" stroke="#111" stroke-width="0.9"/><path d="M7.5 8.5 L5.5 2.5 Q7.5 1.5 9.5 2.5 Z M7.5 8.5 L2.5 11 Q3 13 4.5 14 Z M7.5 8.5 L11.5 12.5 Q10.5 14.5 8.5 15 Z" fill="#000"/><circle cx="7.5" cy="8.5" r="1.2" fill="#f0f010"/></svg>
<div class="t" style="top:128.39px;font-size:11.86px;line-height:15px;color:#999;left:728.6px;">Container</div>
<div class="a" style="left:1069px;top:134px;width:10px;height:1px;background:#555"></div>
<div class="a" style="left:1114px;top:129px;width:10px;height:10px;border:1px solid #d0d0d0"></div>
<svg class="a" style="left:1160px;top:129px;" width="11" height="11" viewBox="0 0 11 11"><path d="M0.5 0.5 L10.5 10.5 M10.5 0.5 L0.5 10.5" stroke="#333" stroke-width="1"/></svg>
<div class="a" style="left:701px;top:157.5px;width:253px;height:129.0px;border:1px solid #dadada;"></div>
<div class="a" style="left:706.6px;top:155.5px;width:82px;height:5px;background:#f0f0f0"></div>
<div class="t" style="top:151.06px;font-size:10.8px;line-height:14px;left:708.6px;">Container mark</div>
<svg class="a" style="left:707.5px;top:168.5px;" width="14" height="14" viewBox="0 0 14 14"><circle cx="7" cy="7" r="6" fill="#fff" stroke="#333" stroke-width="1"/><circle cx="7" cy="7" r="3.5" fill="#333"/></svg>
<div class="t" style="top:169.26px;font-size:10.8px;line-height:14px;left:724.6px;">UKT-PM (container in package)</div>
<svg class="a" style="left:707.5px;top:189.5px;" width="14" height="14" viewBox="0 0 14 14"><circle cx="7" cy="7" r="6" fill="#fff" stroke="#333" stroke-width="1"/></svg>
<div class="t" style="top:190.26px;font-size:10.8px;line-height:14px;left:724.6px;">TK-DM (container without package)</div>
<div class="t" style="top:210.26px;font-size:10.8px;line-height:14px;left:708.6px;">Mark of set</div>
<div class="t" style="top:210.26px;font-size:10.8px;line-height:14px;color:#0062cc;left:849.4px;">Container mark</div>
<div class="a" style="left:708px;top:226.5px;width:105px;height:20px;background:#fff;border:1px solid #666"></div>
<div class="t" style="top:229.76px;font-size:10.8px;line-height:14px;left:711px;">UKT1V-0.5\0050</div>
<div class="a" style="left:813px;top:227.5px;width:18px;height:19px;background:#e6e6e6;border:1px solid #b0b0b0"></div>
<svg class="a" style="left:817px;top:233px;" width="10" height="6" viewBox="0 0 10 6"><path d="M0 0h10l-5 6z" fill="#000"/></svg>
<div class="t" style="top:227.86px;font-size:10.8px;line-height:14px;color:#0062cc;left:849.4px;">KT1-0.5\0050</div>
<div class="a" style="left:734px;top:255.5px;width:174px;height:22px;background:#e1e1e1;border:1px solid #adadad"></div>
<div class="t" style="top:259.76px;font-size:10.8px;line-height:14px;left:521px;width:600px;text-align:center;">Container's editor</div>
<div class="a" style="left:701px;top:294.5px;width:253px;height:120.0px;border:1px solid #dadada;"></div>
<div class="a" style="left:706.6px;top:292.5px;width:86px;height:5px;background:#f0f0f0"></div>
<div class="t" style="top:288.06px;font-size:10.8px;line-height:14px;left:708.6px;">Detector position</div>
<div class="a" style="left:708px;top:304.5px;width:49px;height:20px;background:#fff;border:1px solid #666"></div>
<div class="t" style="top:307.76px;font-size:10.8px;line-height:14px;left:711.4px;">6</div>
<div class="t" style="top:309.26px;font-size:10.8px;line-height:14px;left:764.6px;">- height from floor [cm]</div>
<div class="a" style="left:708px;top:328.5px;width:49px;height:20px;background:#fff;border:1px solid #666"></div>
<div class="t" style="top:331.26px;font-size:10.8px;line-height:14px;left:711.4px;">15</div>
<div class="t" style="top:331.26px;font-size:10.8px;line-height:14px;left:764.6px;">- distance from packing [cm]</div>
<svg class="a" style="left:763.5px;top:352px;" width="14" height="14" viewBox="0 0 14 14"><circle cx="7" cy="7" r="6" fill="#fff" stroke="#333" stroke-width="1"/><circle cx="7" cy="7" r="3.5" fill="#333"/></svg>
<div class="t" style="top:352.26px;font-size:10.8px;line-height:14px;left:781px;">- from container</div>
<svg class="a" style="left:763.5px;top:373px;" width="14" height="14" viewBox="0 0 14 14"><circle cx="7" cy="7" r="6" fill="#fff" stroke="#333" stroke-width="1"/></svg>
<div class="t" style="top:373.26px;font-size:10.8px;line-height:14px;left:781px;">- from axis</div>
<div class="t" style="top:390.66px;font-size:10.8px;line-height:14px;color:#0062cc;left:716.7px;">0</div>
<div class="t" style="top:390.66px;font-size:10.8px;line-height:14px;color:#0062cc;left:764.6px;">- alfa angle[deg]</div>
<div class="a" style="left:701px;top:422.5px;width:253px;height:99.5px;border:1px solid #dadada;"></div>
<div class="a" style="left:706.6px;top:420.5px;width:78px;height:5px;background:#f0f0f0"></div>
<div class="t" style="top:416.06px;font-size:10.8px;line-height:14px;left:708.6px;">Source position</div>
<div class="a" style="left:708px;top:432.5px;width:49px;height:20px;background:#fff;border:1px solid #666"></div>
<div class="t" style="top:435.66px;font-size:10.8px;line-height:14px;left:711.4px;">0</div>
<div class="t" style="top:436.96px;font-size:10.8px;line-height:14px;left:772.5px;">- height above cavity bottom [cm]</div>
<div class="t" style="top:460.76px;font-size:10.8px;line-height:14px;color:#0062cc;left:716.7px;">4.3</div>
<div class="t" style="top:460.76px;font-size:10.8px;line-height:14px;color:#0062cc;left:772.5px;">- cavity height [cm]</div>
<div class="t" style="top:480.06px;font-size:10.8px;line-height:14px;color:#0062cc;left:716.7px;">6</div>
<div class="t" style="top:480.06px;font-size:10.8px;line-height:14px;color:#0062cc;left:772.5px;">- cavity bottom height [cm]</div>
<div class="a" style="left:954px;top:157px;width:233px;height:365px;border:1px solid #dadada;border-right:none;border-bottom:none"></div>
<div class="a" style="left:960.6px;top:155px;width:108px;height:5px;background:#f0f0f0"></div>
<div class="t" style="top:150.56px;font-size:10.8px;line-height:14px;left:962.6px;">Container parametres</div>
<div class="t" style="top:167.26px;font-size:10.8px;line-height:14px;color:#0062cc;left:980.3px;">Material</div>
<div class="t" style="top:167.26px;font-size:10.8px;line-height:14px;color:#0062cc;left:1095px;">Width [cm]</div>
<div class="a" style="left:962px;top:179px;width:205px;height:1.3px;background:#0062cc"></div>
<div class="t" style="top:187.96px;font-size:10.8px;line-height:14px;left:978.1px;">Air</div>
<div class="a" style="left:1096px;top:181.5px;width:73px;height:20px;background:#f0f0f0;border:1px solid #666"></div>
<div class="t" style="top:184.26px;font-size:10.8px;line-height:14px;left:1099.5px;">1.1</div>
<div class="t" style="top:211.96px;font-size:10.8px;line-height:14px;left:978.1px;">Lead</div>
<div class="a" style="left:1096px;top:205.5px;width:73px;height:20px;background:#f0f0f0;border:1px solid #666"></div>
<div class="t" style="top:208.26px;font-size:10.8px;line-height:14px;left:1099.5px;">5.8</div>
<div class="t" style="top:235.96px;font-size:10.8px;line-height:14px;left:978.1px;">Non-corrosive steel</div>
<div class="a" style="left:1096px;top:229.5px;width:73px;height:20px;background:#f0f0f0;border:1px solid #666"></div>
<div class="t" style="top:232.26px;font-size:10.8px;line-height:14px;left:1099.5px;">0.2</div>
<div class="t" style="top:259.96px;font-size:10.8px;line-height:14px;left:978.1px;">Fictitious air</div>
<div class="a" style="left:1096px;top:253.5px;width:73px;height:20px;background:#f0f0f0;border:1px solid #666"></div>
<div class="t" style="top:256.26px;font-size:10.8px;line-height:14px;left:1099.5px;">3.1</div>
<div class="t" style="top:283.96px;font-size:10.8px;line-height:14px;left:978.1px;">Steel10</div>
<div class="a" style="left:1096px;top:277.5px;width:73px;height:20px;background:#f0f0f0;border:1px solid #666"></div>
<div class="t" style="top:280.26px;font-size:10.8px;line-height:14px;left:1099.5px;">0.3</div>
<div class="t" style="top:431.96px;font-size:10.8px;line-height:14px;color:#0062cc;left:770px;width:600px;text-align:center;">Dimensions [cm]</div>
<div class="a" style="left:962px;top:443.5px;width:218px;height:1.3px;background:#0062cc"></div>
<div class="t" style="top:451.06px;font-size:10.8px;line-height:14px;color:#0062cc;left:978px;">R = 10.5</div>
<div class="t" style="top:451.06px;font-size:10.8px;line-height:14px;color:#0062cc;left:1090.2px;">H = 25</div>
<div class="a" style="left:699px;top:523px;width:488px;height:1px;background:#dadada"></div>
<div class="a" style="left:699px;top:524px;width:488px;height:1px;background:#fff"></div>
<div class="a" style="left:1186px;top:524px;width:1px;height:215px;background:#a8a8a8"></div>
<div class="a" style="left:699px;top:739px;width:489px;height:1px;background:#a0a0a0"></div>
<div class="a" style="left:699px;top:740px;width:489px;height:1px;background:#fff"></div>
<svg class="a" style="left:0;top:0" width="1333" height="926"><rect x="722.5" y="547.5" width="144" height="172" fill="#fdf9ee" stroke="#000" stroke-width="1"/><path d="M723 549 H866 M723 718 H866 M724 548 V719 M865 548 V719" stroke="#0c8888" stroke-width="2"/><path d="M723 550 H866" stroke="#0c8888" stroke-width="2"/><rect x="724.5" y="551.5" width="140" height="166" fill="none" stroke="#000" stroke-width="1"/><rect x="746" y="584" width="98" height="121" fill="#000"/><path d="M747 585.5 H843" stroke="#888" stroke-width="1"/><rect x="788" y="649" width="14" height="29" fill="#fff"/><path d="M794.5 649 V676 M792 678 L794.5 674 L797 678" stroke="#000" stroke-width="1.2" fill="none"/><path d="M794.5 537 V729" stroke="#000" stroke-width="1"/><path d="M866 719.5 H1000" stroke="#8a8a8a" stroke-width="1"/><path d="M985.5 678 V719" stroke="#8a8a8a" stroke-width="1"/><defs><linearGradient id="dg" x1="0" y1="0" x2="0" y2="1"><stop offset="0" stop-color="#888"/><stop offset="0.5" stop-color="#111"/><stop offset="1" stop-color="#000"/></linearGradient></defs><rect x="970" y="666" width="30" height="12" fill="url(#dg)"/></svg>
<div class="a" style="left:998px;top:748px;width:89px;height:23px;background:#e1e1e1;border:1px solid #adadad"></div>
<div class="t" style="top:752.76px;font-size:10.8px;line-height:14px;left:742.5px;width:600px;text-align:center;">Ok</div>
<div class="a" style="left:1094px;top:748px;width:89px;height:23px;background:#e1e1e1;border:1px solid #adadad"></div>
<div class="t" style="top:752.76px;font-size:10.8px;line-height:14px;left:838.5px;width:600px;text-align:center;">Cancel</div>
</body></html>
